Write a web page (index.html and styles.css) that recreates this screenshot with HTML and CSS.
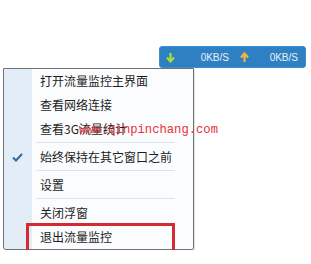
FILE: index.html
```html
<!doctype html>
<html lang="zh-CN">
  <head>
    <meta charset="utf-8" />
    <title>流量监控</title>
    <link rel="stylesheet" href="styles.css">
  </head>
  <body>
    <div class="speed-bar">
      <svg class="arrow" width="9" height="11" viewBox="0 0 9 11">
        <path d="M4.5 1 V9 M1 5.5 L4.5 9.5 L8 5.5" fill="none" stroke="#a4e02c" stroke-width="2.2" />
      </svg>
      <span class="speed down">0KB/S</span>
      <svg class="arrow" width="9" height="11" viewBox="0 0 9 11">
        <path d="M4.5 10 V2 M1 5.5 L4.5 1.5 L8 5.5" fill="none" stroke="#f5b53b" stroke-width="2.2" />
      </svg>
      <span class="speed up">0KB/S</span>
    </div>

    <div class="menu">
      <div class="menu-item">打开流量监控主界面</div>
      <div class="menu-item">查看网络连接</div>
      <div class="menu-item">查看3G流量统计<span class="watermark">www.qinpinchang.com</span></div>
      <div class="sep"></div>
      <div class="menu-item checked">
        <svg class="check" width="11" height="9" viewBox="0 0 11 9">
          <path d="M1 4.5 L4 7.5 L10 1" fill="none" stroke="#2b6ca6" stroke-width="2" />
        </svg>
        始终保持在其它窗口之前
      </div>
      <div class="sep"></div>
      <div class="menu-item">设置</div>
      <div class="sep"></div>
      <div class="menu-item">关闭浮窗</div>
      <div class="menu-item marked">退出流量监控</div>
    </div>
  </body>
</html>
```

FILE: styles.css
```css
* {
  box-sizing: border-box;
}

body {
  margin: 0;
  background: #fff;
  font-family: "Noto Sans CJK SC", "Noto Sans", sans-serif;
}

/* barre de vitesse */
.speed-bar {
  display: flex;
  align-items: center;
  width: 147px;
  height: 22px;
  margin: 46px 0 0 159px;
  padding: 0 7px 0 6px;
  background: #2f80c2;
  border: 1px solid #3f8fd0;
  border-radius: 3px;
}

.arrow {
  flex: none;
}

.speed {
  font-family: "Liberation Sans", Arial, sans-serif;
  font-size: 10px;
  color: #e9f1f8;
  text-align: right;
}

.speed.down {
  width: 54px;
  margin-right: 11px;
}

.speed.up {
  flex: 1;
}

/* menu */
.menu {
  position: relative;
  width: 191px;
  margin: 0 0 0 3px;
  border: 1px solid #6f7378;
  border-radius: 0 0 2px 3px;
  background: linear-gradient(to right, #e2edf7 0, #e2edf7 28px, #fbfcfe 28px);
  box-shadow: 1px 1px 1px rgba(0, 0, 0, 0.12);
}

.menu-item {
  position: relative;
  height: 24px;
  padding-left: 36px;
  font-size: 12px;
  line-height: 24px;
  color: #1c1c1c;
}

.sep {
  position: relative;
  top: 1px;
  height: 4px;
  margin: 0 18px 0 32px;
  border-top: 1px solid #dde3ea;
}

.check {
  position: absolute;
  left: 8px;
  top: 8px;
}

.watermark {
  position: absolute;
  left: 75px;
  top: 1px;
  font-family: "Liberation Mono", monospace;
  font-size: 12.2px;
  color: #e8303a;
  white-space: nowrap;
}

.marked::after {
  content: "";
  position: absolute;
  left: 22px;
  top: -2px;
  width: 143px;
  height: 25px;
  border: 3px solid #d52a30;
}
```
